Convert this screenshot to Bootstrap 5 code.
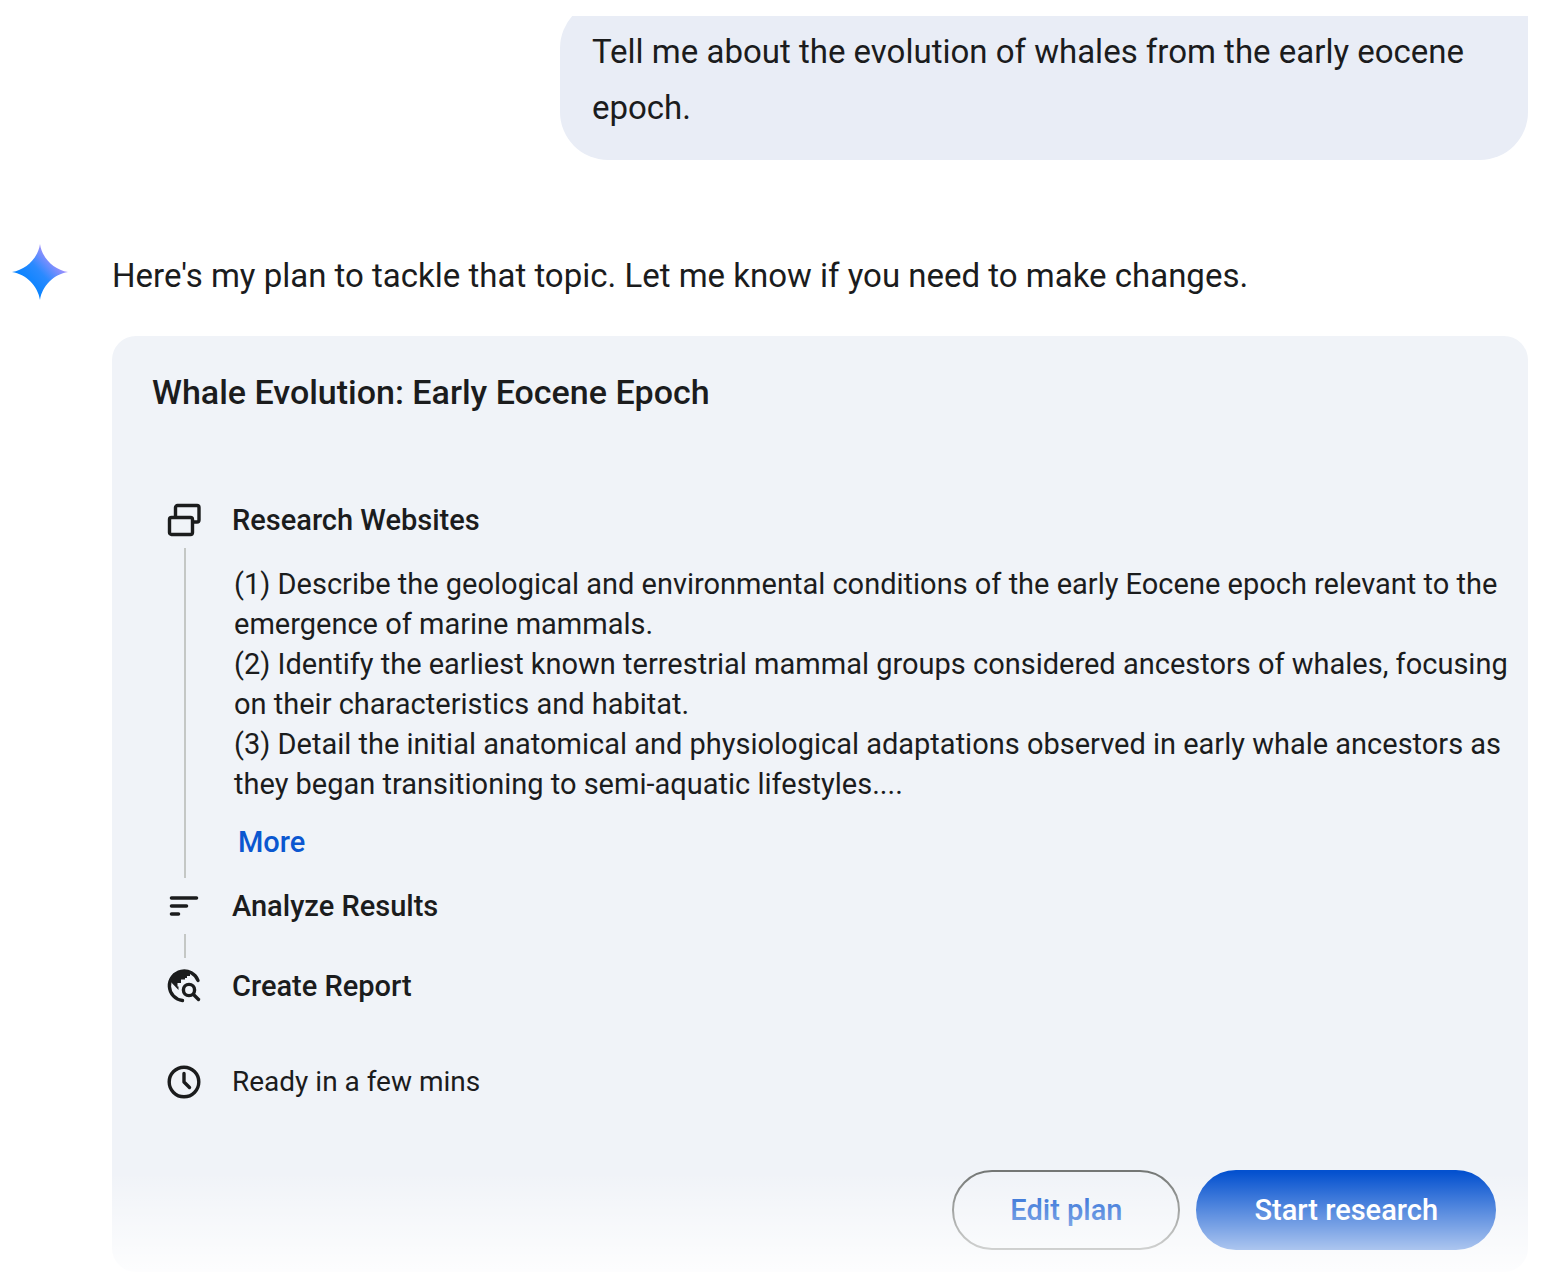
<!DOCTYPE html>
<html lang="en">
<head>
<meta charset="utf-8">
<meta name="viewport" content="width=device-width, initial-scale=1">
<title>Whale Evolution: Early Eocene Epoch</title>
<link href="https://cdn.jsdelivr.net/npm/bootstrap@5.3.0/dist/css/bootstrap.min.css" rel="stylesheet">
<style>
  body { font-family: Roboto, "Liberation Sans", sans-serif; color: #1b1c1d; background: #fff; }
  .chat { padding: 0 18px 0 12px; margin-top: 16px; overflow: hidden; }
  .prompt { max-width: 968px; margin-top: -16px; padding: 24px 32px; background: #e9edf6; border-radius: 48px 8px 48px 48px; }
  .chat-text { font-size: 33px; line-height: 56px; }
  .reply { margin-top: 84px; column-gap: 44px; }
  .spark { width: 56px; height: 56px; }
  .reply-text { padding-top: 4px; margin-bottom: 32px; }
  .plan { background: #f0f3f8; border-radius: 24px; padding: 32px 16px 22px 40px; }
  .plan-title { font-size: 34px; line-height: 48px; font-weight: 500; margin-bottom: 84px; }
  .steps { padding-left: 12px; }
  .step { column-gap: 28px; }
  .rail { width: 40px; }
  .rail svg { width: 40px; height: 40px; }
  .rail-line { width: 2px; margin: 8px 0 8px 2px; background: #c4c7c5; min-height: 24px; }
  .step-name { font-size: 29px; line-height: 40px; font-weight: 500; margin: 0; }
  .step-body { font-size: 29px; line-height: 40px; }
  .details { padding: 24px 0 0 2px; }
  .more { color: #0b57d0; font-size: 29px; line-height: 40px; font-weight: 500; margin: 18px 0 24px 6px; }
  .ready { margin-top: 56px; }
  .ready-text { font-size: 28px; line-height: 40px; }
  .actions { margin-top: 68px; padding-right: 16px; }
  .pill { --bs-btn-font-size: 29px; --bs-btn-line-height: 40px; --bs-btn-font-weight: 500; --bs-btn-padding-x: 56px; --bs-btn-padding-y: 18px; --bs-btn-border-width: 2px; --bs-btn-border-radius: 40px; }
  .pill-line { --bs-btn-color: #0b57d0; --bs-btn-border-color: #747775; }
  .pill-fill { --bs-btn-color: #fff; --bs-btn-bg: #0451cf; --bs-btn-border-color: #0451cf; }
  .fade-out { height: 104px; background: linear-gradient(rgba(255,255,255,0) 4px, rgba(255,255,255,.86)); pointer-events: none; }
</style>
</head>
<body>
<main class="chat position-relative">
  <div class="d-flex justify-content-end">
    <div class="prompt chat-text">Tell me about the evolution of whales from the early eocene epoch.</div>
  </div>

  <div class="reply d-flex align-items-start">
    <svg class="spark flex-shrink-0" viewBox="0 0 56 56" aria-hidden="true">
      <defs><linearGradient id="sparkFill" x1="14" y1="38" x2="42" y2="12" gradientUnits="userSpaceOnUse">
        <stop offset="0" stop-color="#0a84ff"/><stop offset=".45" stop-color="#2a8aff"/><stop offset="1" stop-color="#ac91fc"/>
      </linearGradient></defs>
      <path fill="url(#sparkFill)" d="M28 0C30 14 42 26 56 28C42 30 30 42 28 56C26 42 14 30 0 28C14 26 26 14 28 0Z"/>
    </svg>
    <div class="flex-grow-1">
      <p class="reply-text chat-text">Here's my plan to tackle that topic. Let me know if you need to make changes.</p>

      <section class="plan">
        <h2 class="plan-title">Whale Evolution: Early Eocene Epoch</h2>
        <div class="steps">
          <div class="step d-flex">
            <div class="rail d-flex flex-column align-items-center flex-shrink-0">
              <svg viewBox="0 0 40 40" fill="none" stroke="#1b1c1d" stroke-width="3.400" stroke-linejoin="round" aria-hidden="true"><path d="M11.500 17V7.500a2 2 0 0 1 2-2H33a2 2 0 0 1 2 2V20a2 2 0 0 1-2 2H29"/><rect x="5.500" y="17.500" width="23" height="17" rx="2"/></svg>
              <div class="rail-line flex-grow-1"></div>
            </div>
            <div>
              <h3 class="step-name">Research Websites</h3>
              <div class="details">
                <div class="step-body">(1) Describe the geological and environmental conditions of the early Eocene epoch relevant to the emergence of marine mammals.</div>
                <div class="step-body">(2) Identify the earliest known terrestrial mammal groups considered ancestors of whales, focusing on their characteristics and habitat.</div>
                <div class="step-body">(3) Detail the initial anatomical and physiological adaptations observed in early whale ancestors as they began transitioning to semi-aquatic lifestyles....</div>
              </div>
              <button type="button" class="more btn p-0 border-0">More</button>
            </div>
          </div>
          <div class="step d-flex">
            <div class="rail d-flex flex-column align-items-center flex-shrink-0">
              <svg viewBox="0 0 40 40" fill="none" stroke="#1b1c1d" stroke-width="3.600" stroke-linecap="round" aria-hidden="true"><path d="M7.500 12H32.500M7.500 20H22.500M7.500 28H14.500"/></svg>
              <div class="rail-line"></div>
            </div>
            <h3 class="step-name">Analyze Results</h3>
          </div>
          <div class="step d-flex">
            <div class="rail flex-shrink-0">
              <svg class="d-block" viewBox="0 0 40 40" fill="none" stroke="#1b1c1d" stroke-width="3.400" stroke-linecap="round" aria-hidden="true"><path d="M34 14.500A14.800 14.800 0 1 0 18.500 34.500"/><path fill="#1b1c1d" stroke="none" d="M5 14L14.500 24V20.500H13.500V17H17V13.500H21V12H23V10H26V6L20 4L10 7Z"/><circle cx="25" cy="24" r="5.600"/><path d="M29.500 28.500L34.500 33.500"/></svg>
            </div>
            <h3 class="step-name">Create Report</h3>
          </div>
          <div class="step ready d-flex">
            <div class="rail flex-shrink-0">
              <svg class="d-block" viewBox="0 0 40 40" fill="none" stroke="#1b1c1d" stroke-width="3.400" stroke-linecap="round" stroke-linejoin="round" aria-hidden="true"><circle cx="20" cy="20" r="14.800"/><path d="M20 11.500V20L25.500 25.500"/></svg>
            </div>
            <div class="ready-text">Ready in a few mins</div>
          </div>
        </div>
        <div class="actions d-flex justify-content-end gap-3">
          <button type="button" class="btn pill pill-line">Edit plan</button>
          <button type="button" class="btn pill pill-fill">Start research</button>
        </div>
      </section>
    </div>
  </div>
  <div class="fade-out position-absolute bottom-0 start-0 end-0"></div>
</main>
<script src="https://cdn.jsdelivr.net/npm/bootstrap@5.3.0/dist/js/bootstrap.bundle.min.js"></script>
</body>
</html>
